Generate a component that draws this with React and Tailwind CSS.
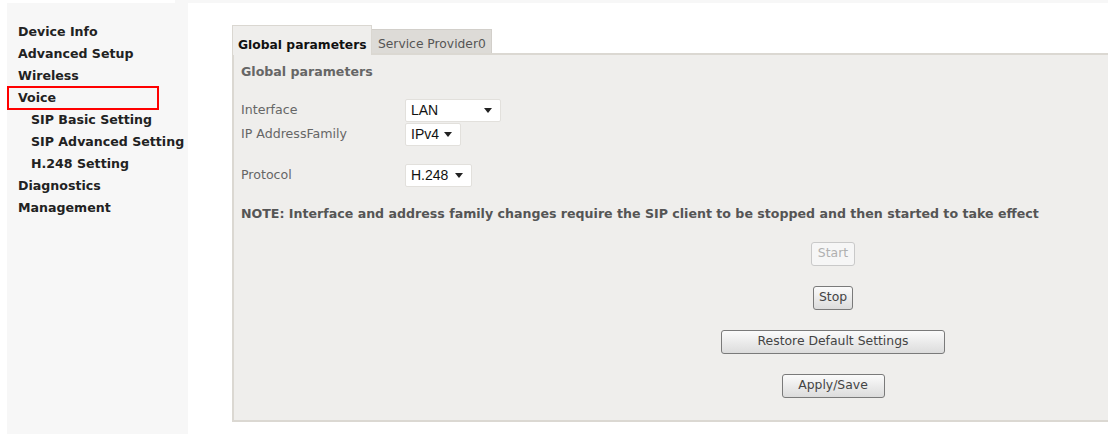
import React from "react";

const menu = [
  { label: "Device Info" },
  { label: "Advanced Setup" },
  { label: "Wireless" },
  { label: "Voice", active: true },
  { label: "SIP Basic Setting", sub: true },
  { label: "SIP Advanced Setting", sub: true },
  { label: "H.248 Setting", sub: true },
  { label: "Diagnostics" },
  { label: "Management" },
];

const Caret = () => (
  <svg width="8" height="5" viewBox="0 0 8 5" className="shrink-0">
    <path d="M0 0 H8 L4 5 Z" fill="#222" />
  </svg>
);

const Select = ({ value, width }) => (
  <div
    className={`flex items-center justify-between h-[23px] pl-[5px] pr-[8px] bg-white border border-[#e2e0dc] rounded-[2px] text-[14px] text-[#111] font-['Liberation_Sans',sans-serif] ${width}`}
  >
    <span>{value}</span>
    <Caret />
  </div>
);

const Btn = ({ children, disabled, width }) => (
  <button
    className={`h-[24px] rounded-[3px] border text-[12.4px] ${width} ${
      disabled
        ? "border-[#c9c9c9] bg-[#f6f6f6] text-[#b0b0b0]"
        : "border-[#7a7a7a] bg-gradient-to-b from-[#fbfbfb] to-[#dcdcdc] text-[#444]"
    }`}
  >
    {children}
  </button>
);

const Row = ({ label, children, className = "" }) => (
  <div className={`flex items-center ${className}`}>
    <div className="w-[164px] text-[#666]">{label}</div>
    {children}
  </div>
);

export default function App() {
  return (
    <div className="w-[1108px] h-[434px] overflow-hidden bg-white flex font-['DejaVu_Sans',sans-serif] text-[12.6px]">
      <aside className="w-[181px] ml-[7px] mt-[3px] bg-[#f7f7f7] pt-[18px] shrink-0">
        {menu.map((m) => (
          <div
            key={m.label}
            className={`relative h-[22px] flex items-center font-bold text-[#222] ${
              m.sub ? "pl-[24px]" : "pl-[11px]"
            }`}
          >
            {m.active && (
              <span className="absolute left-0 w-[152px] -top-px -bottom-px border-2 border-[#f00]" />
            )}
            {m.label}
          </div>
        ))}
      </aside>

      <main className="flex-1 flex flex-col">
        <div className="h-[3px] bg-[#f7f7f7] -ml-[13px]" />
        <div className="ml-[44px] mt-[22px] w-[1000px] flex items-end">
          <div className="h-[30px] w-[140px] bg-[#efeeec] border-t border-l border-r border-[#dad7d1] flex items-end pb-px pl-[5px] font-bold text-[12.3px] text-[#111] -mb-[2px] relative z-10">
            Global parameters
          </div>
          <div className="h-[24px] w-[120px] bg-[#dddbd7] border-t border-r border-[#d2cfca] flex items-end pl-[6px] text-[12.3px] text-[#555]">
            Service Provider0
          </div>
        </div>
        <section className="ml-[44px] w-[1000px] h-[369px] bg-[#efeeec] border-t-2 border-l-2 border-b-2 border-[#dbd8d2] pl-[7px]">
          <div className="font-bold text-[#666] mt-[8px]">Global parameters</div>
          <Row label="Interface" className="mt-[17px]">
            <Select value="LAN" width="w-[96px]" />
          </Row>
          <Row label="IP AddressFamily" className="mt-px">
            <Select value="IPv4" width="w-[56px]" />
          </Row>
          <Row label="Protocol" className="mt-[18px]">
            <Select value="H.248" width="w-[67px]" />
          </Row>
          <div className="font-bold text-[#555] mt-[18px]">
            NOTE: Interface and address family changes require the SIP client to be stopped and then started to take effect
          </div>
          <div className="w-[300px] ml-[442px] flex flex-col items-center gap-[20px] mt-[18px]">
            <Btn disabled width="w-[44px]">Start</Btn>
            <Btn width="w-[40px]">Stop</Btn>
            <Btn width="w-[224px]">Restore Default Settings</Btn>
            <Btn width="w-[103px]">Apply/Save</Btn>
          </div>
        </section>
      </main>
    </div>
  );
}
